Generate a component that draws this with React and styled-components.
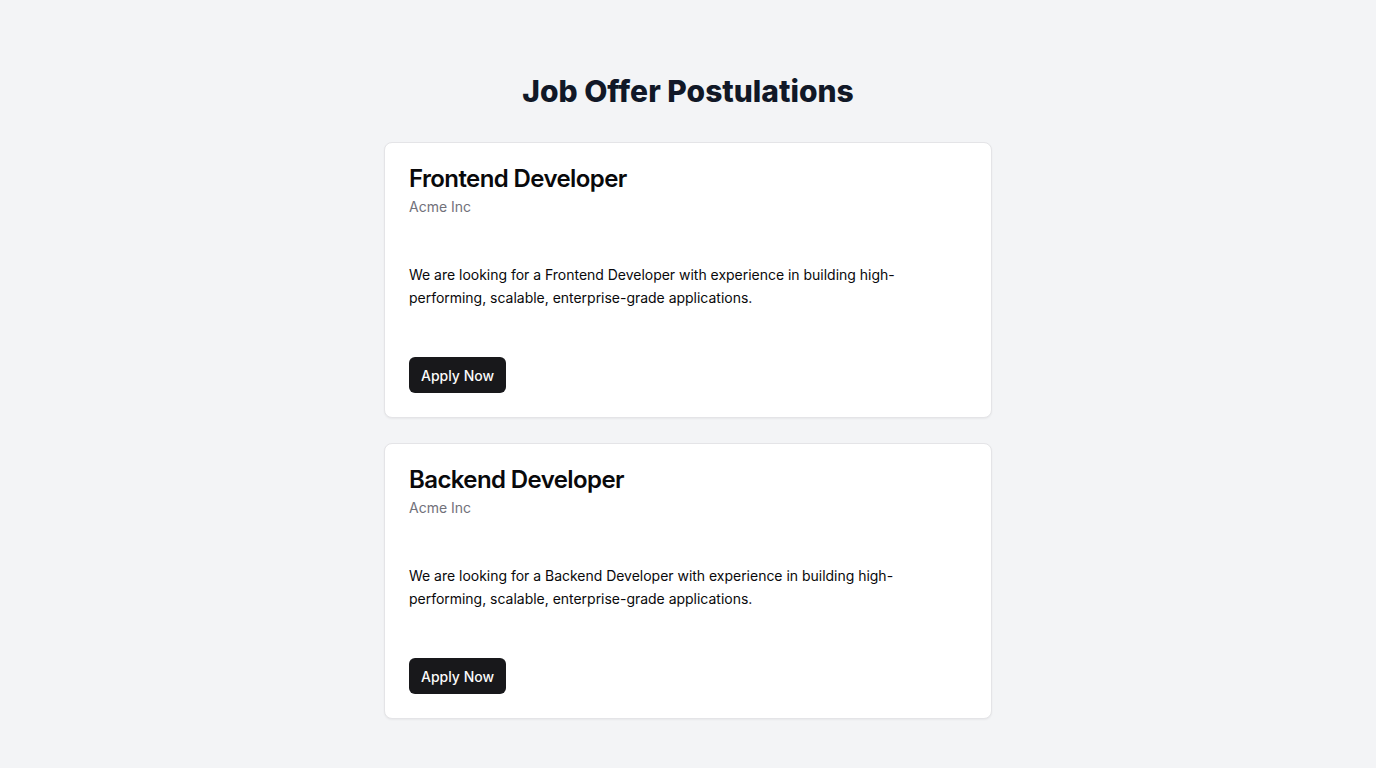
import React from "react";
import styled, { createGlobalStyle } from "styled-components";

const GlobalStyle = createGlobalStyle`
    * {
        box-sizing: border-box;
    }
    body {
        margin: 0;
        background-color: #f3f4f6;
        font-family: Inter, "Noto Sans", sans-serif;
        -webkit-font-smoothing: antialiased;
    }
`;

const Page = styled.div`
    min-height: 100vh;
    background-color: #f3f4f6;
    padding: 73px 16px 48px;
`;

const Container = styled.div`
    max-width: 640px;
    margin: 0 auto;
    padding: 0 16px;
`;

const PageTitle = styled.h1`
    margin: 0 0 33px;
    text-align: center;
    font-size: 30px;
    line-height: 36px;
    font-weight: 800;
    color: #111827;
`;

const CardList = styled.div`
    display: flex;
    flex-direction: column;
    gap: 25px;
`;

const Card = styled.div`
    background-color: #ffffff;
    border: 1px solid #e4e4e7;
    border-radius: 8px;
    box-shadow: 0 1px 2px rgba(0, 0, 0, 0.05);
    color: #09090b;
`;

const CardHeader = styled.div`
    display: flex;
    flex-direction: column;
    gap: 6px;
    padding: 24px;
`;

const CardTitle = styled.h3`
    margin: 0;
    font-size: 24px;
    line-height: 24px;
    font-weight: 600;
    letter-spacing: -0.6px;
`;

const CardDescription = styled.p`
    margin: 0;
    font-size: 14px;
    line-height: 20px;
    color: #71717a;
`;

const CardContent = styled.div`
    padding: 22px 24px 24px;
`;

const Description = styled.p`
    margin: 0;
    max-width: 500px;
    font-size: 14px;
    line-height: 23px;
    letter-spacing: -0.02px;
    color: #09090b;
`;

const CardFooter = styled.div`
    display: flex;
    align-items: center;
    padding: 24px;
`;

const ApplyButton = styled.button`
    height: 36px;
    padding: 0 12px;
    border: none;
    border-radius: 6px;
    background-color: #18181b;
    color: #fafafa;
    font-family: Inter, "Noto Sans", sans-serif;
    font-size: 14px;
    font-weight: 500;
    cursor: pointer;
`;

const offers = [
    { id: 1, title: "Frontend Developer", company: "Acme Inc" },
    { id: 2, title: "Backend Developer", company: "Acme Inc" },
];

const App = () => {
    return (
        <Page>
            <GlobalStyle />
            <Container>
                <PageTitle>Job Offer Postulations</PageTitle>
                <CardList>
                    {offers.map(offer => (
                        <Card key={offer.id}>
                            <CardHeader>
                                <CardTitle>{offer.title}</CardTitle>
                                <CardDescription>{offer.company}</CardDescription>
                            </CardHeader>
                            <CardContent>
                                <Description>
                                    We are looking for a {offer.title} with experience in building high-performing, scalable, enterprise-grade applications.
                                </Description>
                            </CardContent>
                            <CardFooter>
                                <ApplyButton>Apply Now</ApplyButton>
                            </CardFooter>
                        </Card>
                    ))}
                </CardList>
            </Container>
        </Page>
    );
};

export default App;
